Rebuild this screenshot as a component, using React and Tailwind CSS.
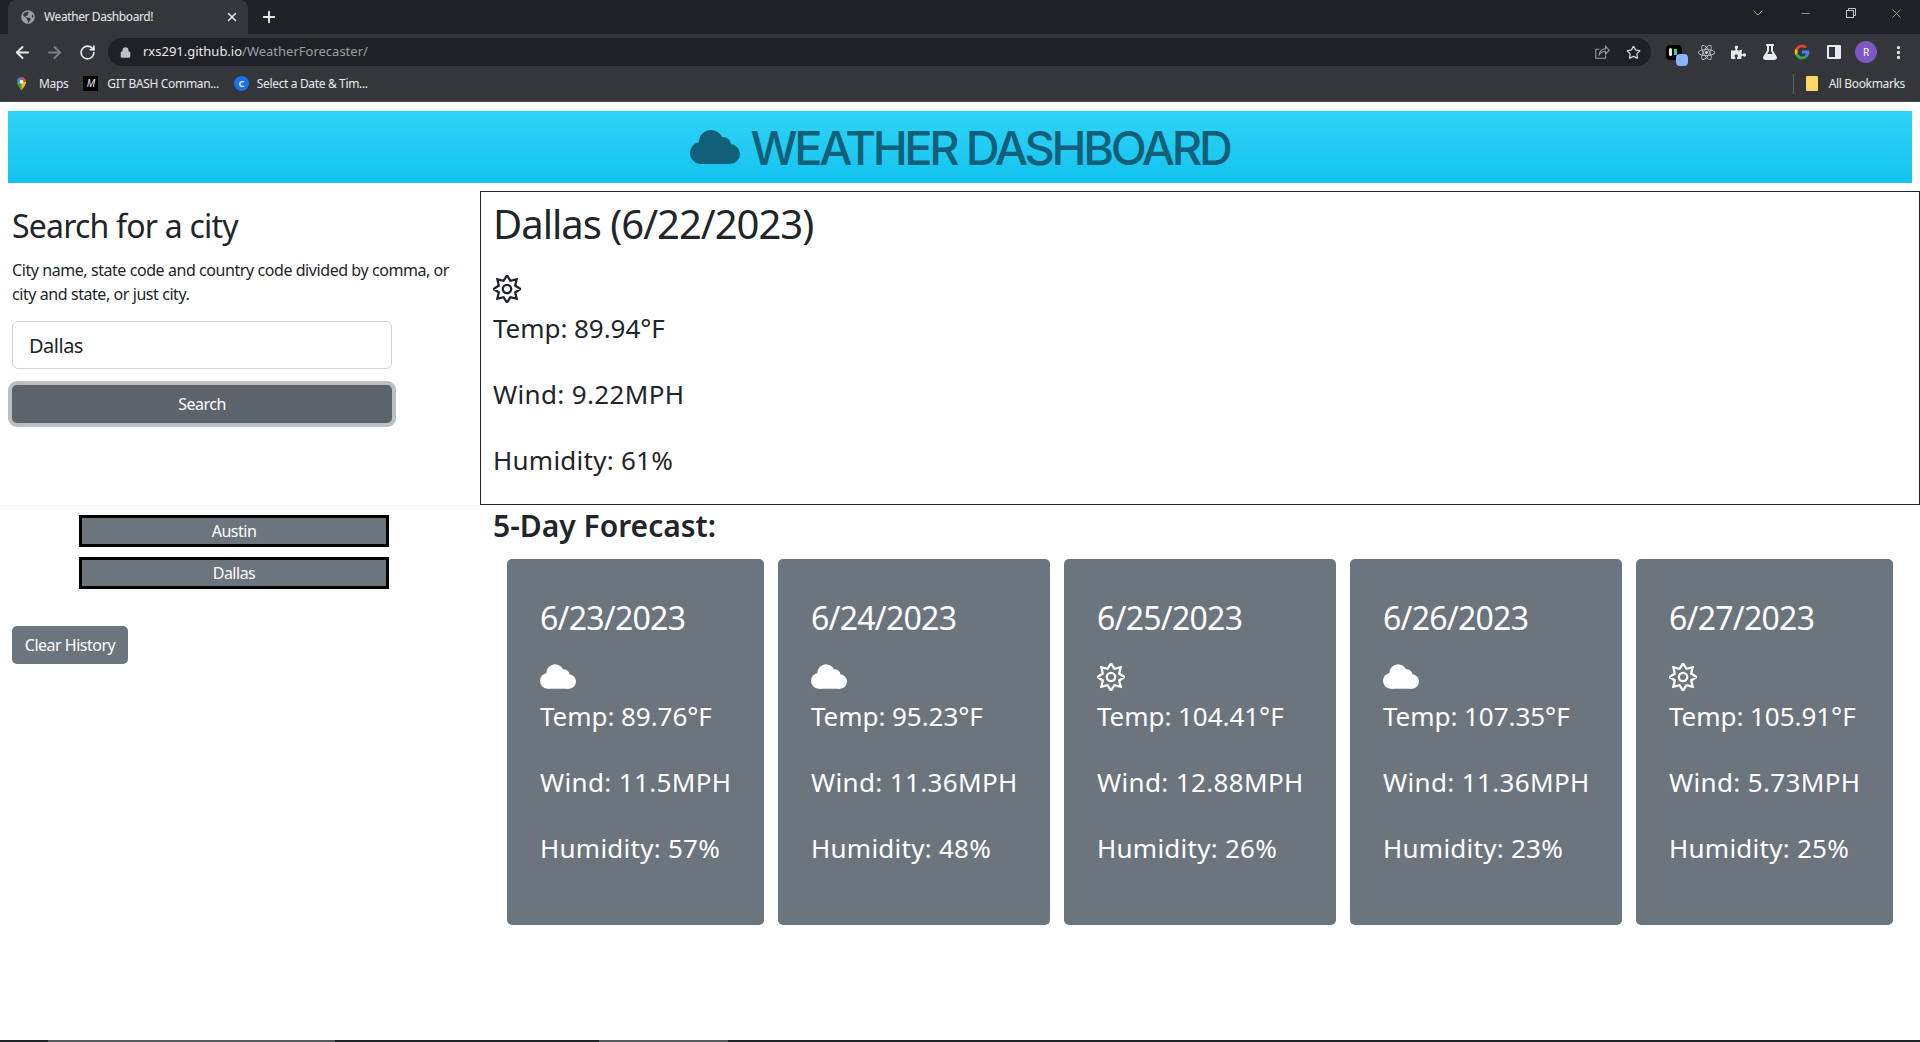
import React from 'react';
import { ArrowLeft, ArrowRight, RotateCw, Lock, Star, ChevronDown, Minus, X, Plus, EllipsisVertical } from 'lucide-react';
import { FaGlobeAmericas, FaReact, FaPuzzlePiece, FaFlask } from 'react-icons/fa';

const forecast = [
  { date: '6/23/2023', icon: 'cloud', temp: '89.76', wind: '11.5', hum: '57', w: 'w-[257px]' },
  { date: '6/24/2023', icon: 'cloud', temp: '95.23', wind: '11.36', hum: '48', w: 'w-[272px]' },
  { date: '6/25/2023', icon: 'sun', temp: '104.41', wind: '12.88', hum: '26', w: 'w-[272px]' },
  { date: '6/26/2023', icon: 'cloud', temp: '107.35', wind: '11.36', hum: '23', w: 'w-[272px]' },
  { date: '6/27/2023', icon: 'sun', temp: '105.91', wind: '5.73', hum: '25', w: 'w-[257px]' },
];

// eight pointed star for the "clear sky" icon
const starPoints = Array.from({ length: 16 }, (_, i) => {
  const r = i % 2 ? 8.9 : 13.6;
  const a = (Math.PI / 8) * i - Math.PI / 2;
  return `${14 + r * Math.cos(a)},${14 + r * Math.sin(a)}`;
}).join(' ');

const SunIcon = ({ className }) => (
  <svg viewBox="0 0 28 28" className={className} fill="none" stroke="currentColor" strokeWidth="2.3" strokeLinejoin="miter">
    <polygon points={starPoints} />
    <circle cx="14" cy="14" r="4.2" />
  </svg>
);

const CloudIcon = ({ className }) => (
  <svg viewBox="0 0 50 34" className={className} fill="currentColor">
    <circle cx="11" cy="23" r="11" />
    <circle cx="21" cy="12" r="12" />
    <circle cx="33" cy="15" r="8" />
    <circle cx="40" cy="24" r="10" />
    <rect x="11" y="15" width="29" height="19" />
  </svg>
);

const ExtSlot = ({ children }) => (
  <div className="w-[32px] h-[32px] flex items-center justify-center">{children}</div>
);

const ChromeBar = () => (
  <div className="bg-[#35363a] text-[#e8eaed] font-['Noto_Sans',sans-serif] shrink-0">
    <div className="h-[34px] bg-[#202124] flex items-end pl-2">
      <div className="w-[240px] h-[34px] bg-[#35363a] rounded-t-lg flex items-center pl-[13px] pr-[9px] text-[12px] tracking-[-0.4px]">
        <FaGlobeAmericas size={14} className="text-[#9aa0a6] mr-[9px] shrink-0" />
        <span className="flex-1 text-[#e8eaed]">Weather Dashboard!</span>
        <X size={14} strokeWidth={2.5} />
      </div>
      <Plus size={18} strokeWidth={2.5} className="ml-[12px] mb-[8px]" />
      <div className="ml-auto flex items-center self-start pt-[5px] text-[#c4c7ca]">
        <ChevronDown size={16} strokeWidth={1.2} className="mr-[33px]" />
        <Minus size={13} strokeWidth={1.2} className="mr-[33px]" />
        <svg viewBox="0 0 12 12" className="w-[12px] h-[12px] mr-[32px]" fill="none" stroke="currentColor">
          <rect x="1.5" y="3.5" width="7" height="7" />
          <path d="M3.5 3.500v-2h7v7h-2" />
        </svg>
        <X size={15} strokeWidth={1.1} className="mr-[16px]" />
      </div>
    </div>
    <div className="h-[36px] flex items-center pl-[13px] pr-[6px]">
      <ArrowLeft size={19} strokeWidth={2.4} className="text-[#e8eaed] shrink-0" />
      <ArrowRight size={19} strokeWidth={2.4} className="text-[#7d8084] ml-[13px] shrink-0" />
      <RotateCw size={17} strokeWidth={2.4} className="text-[#e8eaed] ml-[15px] shrink-0" />
      <div className="ml-[12px] mr-[7px] flex-1 h-[28px] rounded-full bg-[#202124] flex items-center pl-[12px] text-[13px]">
        <Lock size={11} strokeWidth={3} fill="currentColor" className="text-[#bdc1c6] mr-[12px]" />
        <span className="text-[#e8eaed]">rxs291.github.io</span>
        <span className="text-[#9aa0a6]">/WeatherForecaster/</span>
        <svg viewBox="0 0 18 18" className="ml-auto w-[16px] h-[16px] text-[#9aa0a6]" fill="none" stroke="currentColor" strokeWidth="1.2">
          <path d="M6 6H2v10h11v-3" />
          <path d="M6 12c0-4 3-6.500 7-6.500V2.500l4 4.500-4 4.500V8.500c-3 0-5.500 1-7 3.500z" />
        </svg>
        <Star size={15} strokeWidth={2} className="ml-[16px] mr-[10px] text-[#d5d7da]" />
      </div>
      <ExtSlot>
        <div className="relative w-[16px] h-[15px] rounded-sm bg-black">
          <div className="absolute w-[3px] h-[8px] rounded-sm bg-[#e8eaed] top-[3px] left-[3px]"></div>
          <div className="absolute w-[3px] h-[6px] bg-[#2ed3a0] top-[4px] left-[8px]"></div>
          <div className="absolute w-[12px] h-[12px] rounded-sm bg-[#8ab4f8] top-[9px] left-[10px]"></div>
        </div>
      </ExtSlot>
      <ExtSlot><FaReact size={17} className="text-[#d7d9dc]" /></ExtSlot>
      <ExtSlot><FaPuzzlePiece size={15} className="text-[#e8eaed]" /></ExtSlot>
      <ExtSlot><FaFlask size={16} className="text-[#e8eaed]" /></ExtSlot>
      <ExtSlot>
        <svg viewBox="0 0 48 48" className="w-[16px] h-[16px]">
          <path fill="#ea4335" d="M24 10c3.500 0 6.600 1.300 9 3.400l6-6C35.300 3.900 30 2 24 2 15.400 2 8 6.900 4.400 14.100l7 5.400C13 14 18 10 24 10z" />
          <path fill="#4285f4" d="M46 24c0-1.500-.1-3-.4-4.500H24v9h12.400c-.5 2.900-2.200 5.300-4.600 6.900l7 5.400C43 36.900 46 31 46 24z" />
          <path fill="#fbbc05" d="M11.400 28.500C10.900 27 10.600 25.500 10.600 24s.3-3 .8-4.500l-7-5.400C3 17 2 20.400 2 24s1 7 2.400 9.900z" />
          <path fill="#34a853" d="M24 46c6 0 11-2 14.800-5.200l-7-5.400c-2 1.300-4.600 2.100-7.800 2.100-6 0-11-4-12.600-9.500l-7 5.400C8 41.100 15.400 46 24 46z" />
        </svg>
      </ExtSlot>
      <ExtSlot><div className="w-[14px] h-[14px] border-2 border-[#e8eaed] border-r-[6px] rounded-[1px]"></div></ExtSlot>
      <ExtSlot><div className="w-[22px] h-[22px] rounded-full bg-[#7e57c2] flex items-center justify-center text-[10px] text-white">R</div></ExtSlot>
      <ExtSlot><EllipsisVertical size={17} strokeWidth={2.6} /></ExtSlot>
    </div>
    <div className="h-[32px] flex items-center pl-[16px] pr-[15px] pb-[4px] text-[12px] tracking-[-0.35px] border-b border-[#4a4b4f]">
      <svg viewBox="0 0 12 16" className="w-[11px] h-[15px]">
        <path fill="#34a853" d="M6 16C4 12 1 9.500 1 6h5z" />
        <path fill="#fbbc05" d="M6 16c2-4 5-6.500 5-10H6z" />
        <path fill="#4285f4" d="M1 6a5 5 0 0 1 5-5v5z" />
        <path fill="#ea4335" d="M6 1a5 5 0 0 1 5 5H6z" />
        <circle cx="6" cy="6" r="2" fill="#fff" />
      </svg>
      <span className="ml-[12px]">Maps</span>
      <div className="ml-[15px] w-[15px] h-[15px] bg-black text-[10px] italic flex items-center justify-center">M</div>
      <span className="ml-[9px]">GIT BASH Comman...</span>
      <div className="ml-[15px] w-[15px] h-[15px] rounded-full bg-[#1a73e8] flex items-center justify-center text-[9px] font-bold">C</div>
      <span className="ml-[8px]">Select a Date &amp; Tim...</span>
      <div className="ml-auto w-px h-[20px] bg-[#5f6368]"></div>
      <div className="ml-[12px] w-[12px] h-[15px] bg-[#fdd663] rounded-[1px]"></div>
      <span className="ml-[11px]">All Bookmarks</span>
    </div>
  </div>
);

const Reading = ({ temp, wind, hum }) => (
  <>
    <p className="text-[26px] leading-[36px] mb-[30px] tracking-[-0.05px]">Temp: {temp}°F</p>
    <p className="text-[26px] leading-[36px] mb-[30px] tracking-[0.35px]">Wind: {wind}MPH</p>
    <p className="text-[26px] leading-[36px] tracking-[0.25px]">Humidity: {hum}%</p>
  </>
);

export default function App() {
  return (
    <div className="h-screen overflow-hidden flex flex-col bg-white font-['Noto_Sans',sans-serif] text-[#212529]">
      <ChromeBar />
      <div className="flex-1 min-h-0 flex flex-col">
        <header className="mx-2 mt-[9px] h-[72px] bg-gradient-to-b from-[#2fd3f6] to-[#10c3ef] flex items-center justify-center text-[#115f78] shrink-0">
          <CloudIcon className="w-[50px] h-[34px]" />
          <h1 className="ml-[10px] font-['Inter',sans-serif] text-[47px] leading-none font-medium tracking-[-3.3px]">WEATHER DASHBOARD</h1>
        </header>
        <div className="flex mt-2">
          <aside className="w-[480px] shrink-0">
            <div className="h-[319px] px-3 pt-[16px] border-b-[5px] border-[#f8f9fa]">
              <h2 className="text-[32px] leading-[38px] tracking-[-0.8px]">Search for a city</h2>
              <p className="mt-[13px] text-[16px] leading-[24px] tracking-[-0.43px]">City name, state code and country code divided by comma, or city and state, or just city.</p>
              <input readOnly value="Dallas" className="mt-[15px] block w-[380px] h-[48px] px-[16px] text-[20px] border border-[#ced4da] rounded-md outline-none tracking-[-0.5px]" />
              <button className="mt-4 block w-[380px] h-[38px] bg-[#5c636a] text-white text-[16px] rounded-[5px] ring-4 ring-[#bcc0c4] tracking-[-0.5px]">Search</button>
            </div>
            <div className="pl-[79px] mt-[5px] flex flex-col gap-[10px]">
              <button className="w-[310px] h-[32px] bg-[#6c757d] border-[3px] border-black text-white text-[16px] leading-none tracking-[-0.5px]">Austin</button>
              <button className="w-[310px] h-[32px] bg-[#6c757d] border-[3px] border-black text-white text-[16px] leading-none tracking-[-0.5px]">Dallas</button>
            </div>
            <button className="ml-3 mt-[37px] w-[116px] h-[38px] bg-[#6c757d] text-white text-[16px] rounded-[5px] tracking-[-0.5px]">Clear History</button>
          </aside>
          <main className="flex-1 min-w-0">
            <section className="h-[314px] border border-[#212529] pl-[12px] pt-[4px]">
              <h2 className="text-[40px] leading-[56px] tracking-[-1px]">Dallas (6/22/2023)</h2>
              <SunIcon className="w-[28px] h-[28px] mt-[23px] mb-[7px]" />
              <Reading temp="89.94" wind="9.22" hum="61" />
            </section>
            <h3 className="pl-[13px] mt-[1px] text-[30px] leading-[40px] font-semibold">5-Day Forecast:</h3>
            <div className="flex gap-[14px] pl-[27px] mt-[13px]">
              {forecast.map((d) => (
                <div key={d.date} className={`${d.w} h-[366px] bg-[#6c757d] rounded-[5px] text-white pl-[33px] pt-[38px]`}>
                  <div className="text-[32px] leading-[42px] tracking-[-0.75px]">{d.date}</div>
                  {d.icon === 'cloud'
                    ? <CloudIcon className="w-[36px] h-[25px] mt-[25px] mb-[9px]" />
                    : <SunIcon className="w-[28px] h-[28px] mt-[24px] mb-[7px]" />}
                  <Reading temp={d.temp} wind={d.wind} hum={d.hum} />
                </div>
              ))}
            </div>
          </main>
        </div>
      </div>
      <div className="h-[2px] shrink-0 bg-[#202124] flex">
        <div className="ml-[48px] w-[287px] bg-[#55585c]"></div>
        <div className="ml-[264px] w-[129px] bg-[#55585c]"></div>
      </div>
    </div>
  );
}
